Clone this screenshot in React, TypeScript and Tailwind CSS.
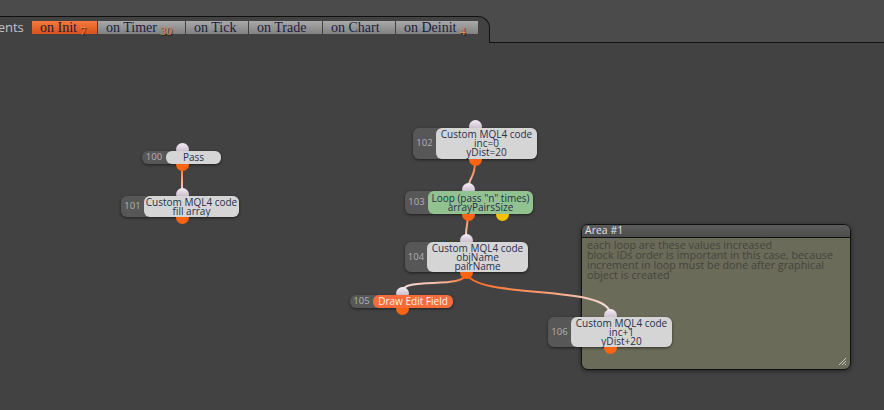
import React from "react";

type NodeData = {
  id: string;
  x: number; // left of dark part
  bx: number; // left of box
  bw: number; // box width
  y: number;
  h: number;
  lines: string[];
  variant: "gray" | "green" | "orange";
  inX: number;
  outX: number;
  yellowX?: number;
};

const CANVAS_TOP = 43;

const nodes: NodeData[] = [
  { id: "100", x: 142, bx: 166, bw: 55, y: 151, h: 13, lines: ["Pass"], variant: "gray", inX: 182, outX: 182 },
  { id: "101", x: 121, bx: 144, bw: 95, y: 196, h: 21, lines: ["Custom MQL4 code", "fill array"], variant: "gray", inX: 182, outX: 182 },
  { id: "102", x: 413, bx: 436, bw: 101, y: 128, h: 31, lines: ["Custom MQL4 code", "inc=0", "yDist=20"], variant: "gray", inX: 475, outX: 475 },
  { id: "103", x: 405, bx: 428, bw: 105, y: 191, h: 23, lines: ["Loop (pass \"n\" times)", "arrayPairsSize"], variant: "green", inX: 468, outX: 468, yellowX: 502 },
  { id: "104", x: 405, bx: 427, bw: 101, y: 242, h: 30, lines: ["Custom MQL4 code", "objName", "pairName"], variant: "gray", inX: 466, outX: 466 },
  { id: "105", x: 350, bx: 373, bw: 80, y: 295, h: 13, lines: ["Draw Edit Field"], variant: "orange", inX: 402, outX: 402 },
  { id: "106", x: 548, bx: 571, bw: 101, y: 317, h: 30, lines: ["Custom MQL4 code", "inc+1", "yDist+20"], variant: "gray", inX: 610, outX: 610 },
];

const tabs = [
  { label: "on Init", w: 65, active: true, badge: "7" },
  { label: "on Timer", w: 87, badge: "30" },
  { label: "on Tick", w: 62 },
  { label: "on Trade", w: 73 },
  { label: "on Chart", w: 72 },
  { label: "on Deinit", w: 82, badge: "4" },
];

function Node({ n }: { n: NodeData }) {
  const idW = n.bx - n.x;
  const totalW = n.bx + n.bw - n.x;
  const boxCls =
    n.variant === "green"
      ? "bg-[#92c290] text-[#23304a]"
      : n.variant === "orange"
      ? "bg-[#f86c3c] text-[#fff2e8]"
      : "bg-[#d5d5d5] text-[#28304c]";
  return (
    <div
      className="absolute flex rounded-[6px] bg-[#575757] shadow-[0_1px_3px_rgba(0,0,0,0.55)]"
      style={{ left: n.x, top: n.y - CANVAS_TOP, width: totalW, height: n.h }}
    >
      <div
        className="absolute h-[13px] w-[13px] rounded-full bg-gradient-to-b from-[#f6eef6] to-[#b4a4b8]"
        style={{ left: n.inX - n.x - 6.5, top: -8 }}
      />
      <div
        className="absolute h-[13px] w-[13px] rounded-full bg-[#ff6412]"
        style={{ left: n.outX - n.x - 6.5, top: n.h - 6 }}
      />
      {n.yellowX !== undefined && (
        <div
          className="absolute h-[13px] w-[13px] rounded-full bg-[#f2c200]"
          style={{ left: n.yellowX - n.x - 6.5, top: n.h - 6 }}
        />
      )}
      <div
        className="flex shrink-0 items-center justify-center text-[9.5px] text-[#b2b2b2]"
        style={{ width: idW }}
      >
        {n.id}
      </div>
      <div
        className={`relative z-10 flex flex-1 flex-col items-center justify-center rounded-[6px] text-[10px] leading-[9px] ${boxCls}`}
      >
        {n.lines.map((l) => (
          <div key={l} className="whitespace-nowrap">
            {l}
          </div>
        ))}
      </div>
    </div>
  );
}

function Connections() {
  const y = (v: number) => v - CANVAS_TOP;
  return (
    <svg className="absolute left-0 top-0" width={884} height={367}>
      <defs>
        <linearGradient id="g1" gradientUnits="userSpaceOnUse" x1="0" y1={y(166)} x2="0" y2={y(190)}>
          <stop offset="0" stopColor="#ff6a1e" />
          <stop offset="1" stopColor="#f6d2cc" />
        </linearGradient>
        <linearGradient id="g2" gradientUnits="userSpaceOnUse" x1="0" y1={y(160)} x2="0" y2={y(193)}>
          <stop offset="0" stopColor="#ff6a1e" />
          <stop offset="1" stopColor="#f6d8d8" />
        </linearGradient>
        <linearGradient id="g3" gradientUnits="userSpaceOnUse" x1="0" y1={y(214)} x2="0" y2={y(236)}>
          <stop offset="0" stopColor="#ff6a1e" />
          <stop offset="1" stopColor="#f6d8d8" />
        </linearGradient>
        <linearGradient id="g4" gradientUnits="userSpaceOnUse" x1="466" y1="0" x2="402" y2="0">
          <stop offset="0" stopColor="#ff6a1e" />
          <stop offset="0.35" stopColor="#f7b49c" />
          <stop offset="1" stopColor="#f6dcdc" />
        </linearGradient>
        <linearGradient id="g5" gradientUnits="userSpaceOnUse" x1="466" y1="0" x2="610" y2="0">
          <stop offset="0" stopColor="#ff6a1e" />
          <stop offset="0.55" stopColor="#fa9c74" />
          <stop offset="1" stopColor="#f6e0e0" />
        </linearGradient>
      </defs>
      <path d={`M182 ${y(166)} L182 ${y(190)}`} stroke="url(#g1)" strokeWidth="2" fill="none" />
      <path d={`M475 ${y(162)} C475 ${y(180)}, 468 ${y(175)}, 468 ${y(193)}`} stroke="url(#g2)" strokeWidth="2" fill="none" />
      <path d={`M468 ${y(214)} C468 ${y(225)}, 466 ${y(225)}, 466 ${y(236)}`} stroke="url(#g3)" strokeWidth="2" fill="none" />
      <path d={`M466 ${y(273)} C466 ${y(290)}, 402 ${y(276)}, 402 ${y(292)}`} stroke="url(#g4)" strokeWidth="2" fill="none" />
      <path d={`M466 ${y(273)} C476 ${y(300)}, 610 ${y(284)}, 610 ${y(314)}`} stroke="url(#g5)" strokeWidth="2" fill="none" />
    </svg>
  );
}

function Area() {
  const lines = [
    "each loop are these values increased",
    "block IDs order is important in this case, because",
    "increment in loop must be done after graphical",
    "object is created",
  ];
  return (
    <div
      className="absolute flex flex-col overflow-hidden rounded-[7px] border border-[#111] bg-[#6b6b59] shadow-[0_1px_4px_rgba(0,0,0,0.5)]"
      style={{ left: 581, top: 224 - CANVAS_TOP, width: 270, height: 146 }}
    >
      <div className="flex h-[13px] items-center border-b border-[#111] bg-gradient-to-b from-[#5c5c5c] to-[#4c4c4c] pl-[3px] text-[10.5px] text-[#e2e2e2]">
        Area #1
      </div>
      <div className="relative flex-1 px-[5px] pt-[2px] text-[10.8px] leading-[10px] text-[#44443c]">
        {lines.map((l) => (
          <div key={l} className="whitespace-nowrap">
            {l}
          </div>
        ))}
        <svg className="absolute bottom-[3px] right-[3px]" width="9" height="9" viewBox="0 0 9 9">
          <path d="M8 1 L1 8 M8 4 L4 8 M8 7 L7 8" stroke="#c8c8c0" strokeWidth="1" />
        </svg>
      </div>
    </div>
  );
}

export default function App() {
  return (
    <div
      className="flex h-[410px] w-[884px] flex-col overflow-hidden bg-[#424242]"
      style={{ fontFamily: '"Open Sans", "DejaVu Sans", sans-serif' }}
    >
      <div className="flex h-[43px] shrink-0 bg-[#4b4b4b]">
        <div className="mt-[16px] flex h-[27px] w-[490px] shrink-0 items-start overflow-hidden rounded-tr-[12px] border-r border-t border-[#111] bg-[#424242] pt-[4px]">
          <div className="flex h-[13px] w-[32px] shrink-0 items-center overflow-hidden text-[13px] text-[#c4c4c4]">
            <span className="-ml-[16px] whitespace-nowrap">Events</span>
          </div>
          <div className="flex gap-[1px]">
            {tabs.map((t) => (
              <div
                key={t.label}
                className={`relative flex h-[13px] shrink-0 items-center pl-[8px] text-[14px] text-[#1b1b3e] ${
                  t.active
                    ? "bg-gradient-to-b from-[#f57a3c] to-[#d8501a]"
                    : "bg-gradient-to-b from-[#a9a9a9] to-[#818181]"
                }`}
                style={{ width: t.w, fontFamily: '"Liberation Serif", "DejaVu Serif", serif' }}
              >
                <span className="whitespace-nowrap leading-none">{t.label}</span>
                {t.badge && (
                  <span className="ml-[3px] mt-[6px] text-[12px] leading-none text-[#e48a56] [text-shadow:1px_1px_1px_rgba(0,0,0,0.7)]">
                    {t.badge}
                  </span>
                )}
              </div>
            ))}
          </div>
        </div>
        <div className="h-[43px] flex-1 border-b border-[#111]" />
      </div>
      <div className="relative flex-1">
        <Area />
        <Connections />
        {nodes.map((n) => (
          <Node key={n.id} n={n} />
        ))}
      </div>
    </div>
  );
}
